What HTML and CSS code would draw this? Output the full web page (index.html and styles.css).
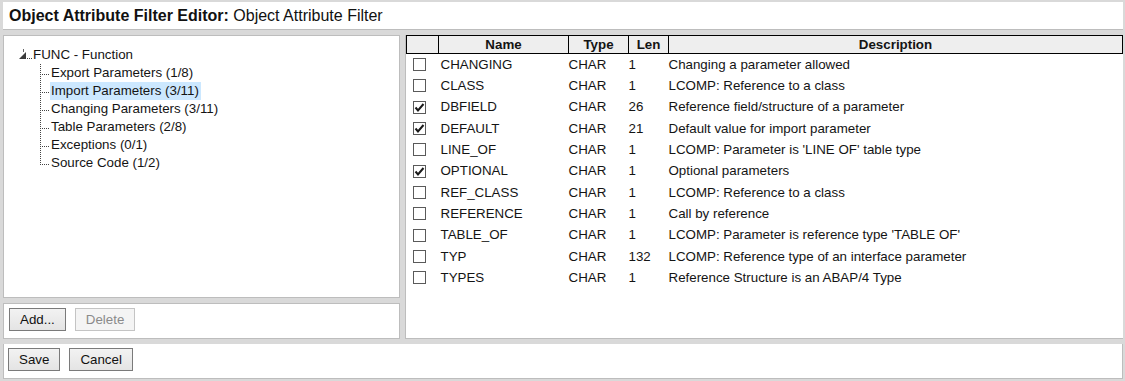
FILE: index.html
```html
<!DOCTYPE html>
<html>
<head>
<meta charset="UTF-8">
<title>Object Attribute Filter Editor</title>
<link rel="stylesheet" href="styles.css">
</head>
<body>
<div class="app">
  <div class="titlebar"><b>Object Attribute Filter Editor:</b> Object Attribute Filter</div>

  <div class="main">
    <div class="leftcol">
      <div class="panel tree">
        <div class="root">
          <svg class="twisty" width="15" height="12" viewBox="0 0 15 12">
            <path d="M5.5 1v3" stroke="#666" stroke-width="1"/>
            <polygon points="8,4 8,11 1,11" fill="#3a3a3a"/>
            <rect x="9" y="10" width="1" height="1" fill="#444"/>
            <rect x="11" y="10" width="1" height="1" fill="#444"/>
            <rect x="13" y="10" width="1" height="1" fill="#444"/>
          </svg>
          <span class="label">FUNC - Function</span>
        </div>
        <ul class="children">
          <li><span class="label">Export Parameters (1/8)</span></li>
          <li class="selected"><span class="label">Import Parameters (3/11)</span></li>
          <li><span class="label">Changing Parameters (3/11)</span></li>
          <li><span class="label">Table Parameters (2/8)</span></li>
          <li><span class="label">Exceptions (0/1)</span></li>
          <li class="last"><span class="label">Source Code (1/2)</span></li>
        </ul>
      </div>
      <div class="hsplit"></div>
      <div class="panel actions">
        <button class="btn">Add...</button>
        <button class="btn" disabled>Delete</button>
      </div>
    </div>

    <div class="vsplit"></div>

    <div class="panel grid">
      <table class="attrs">
        <colgroup>
          <col class="c-sel"><col class="c-name"><col class="c-type"><col class="c-len"><col>
        </colgroup>
        <thead>
          <tr><th></th><th>Name</th><th>Type</th><th>Len</th><th>Description</th></tr>
        </thead>
        <tbody>
          <tr><td class="sel"><span class="cb"></span></td><td class="name">CHANGING</td><td>CHAR</td><td>1</td><td>Changing a parameter allowed</td></tr>
          <tr><td class="sel"><span class="cb"></span></td><td class="name">CLASS</td><td>CHAR</td><td>1</td><td>LCOMP: Reference to a class</td></tr>
          <tr><td class="sel"><span class="cb on"><svg width="11" height="11" viewBox="0 0 11 11"><polyline points="1.5,5.5 4,8.5 9.5,2" fill="none" stroke="#1a1a1a" stroke-width="2"/></svg></span></td><td class="name">DBFIELD</td><td>CHAR</td><td>26</td><td>Reference field/structure of a parameter</td></tr>
          <tr><td class="sel"><span class="cb on"><svg width="11" height="11" viewBox="0 0 11 11"><polyline points="1.5,5.5 4,8.5 9.5,2" fill="none" stroke="#1a1a1a" stroke-width="2"/></svg></span></td><td class="name">DEFAULT</td><td>CHAR</td><td>21</td><td>Default value for import parameter</td></tr>
          <tr><td class="sel"><span class="cb"></span></td><td class="name">LINE_OF</td><td>CHAR</td><td>1</td><td>LCOMP: Parameter is 'LINE OF' table type</td></tr>
          <tr><td class="sel"><span class="cb on"><svg width="11" height="11" viewBox="0 0 11 11"><polyline points="1.5,5.5 4,8.5 9.5,2" fill="none" stroke="#1a1a1a" stroke-width="2"/></svg></span></td><td class="name">OPTIONAL</td><td>CHAR</td><td>1</td><td>Optional parameters</td></tr>
          <tr><td class="sel"><span class="cb"></span></td><td class="name">REF_CLASS</td><td>CHAR</td><td>1</td><td>LCOMP: Reference to a class</td></tr>
          <tr><td class="sel"><span class="cb"></span></td><td class="name">REFERENCE</td><td>CHAR</td><td>1</td><td>Call by reference</td></tr>
          <tr><td class="sel"><span class="cb"></span></td><td class="name">TABLE_OF</td><td>CHAR</td><td>1</td><td>LCOMP: Parameter is reference type 'TABLE OF'</td></tr>
          <tr><td class="sel"><span class="cb"></span></td><td class="name">TYP</td><td>CHAR</td><td>132</td><td>LCOMP: Reference type of an interface parameter</td></tr>
          <tr><td class="sel"><span class="cb"></span></td><td class="name">TYPES</td><td>CHAR</td><td>1</td><td>Reference Structure is an ABAP/4 Type</td></tr>
        </tbody>
      </table>
    </div>
  </div>

  <div class="panel footer">
    <button class="btn">Save</button>
    <button class="btn">Cancel</button>
  </div>
</div>
</body>
</html>
```

FILE: styles.css
```css
body{margin:0;font-family:"Liberation Sans",Arial,sans-serif;font-size:13.33px;color:#141414;background:#fff}
.app{width:1125px;height:381px;box-sizing:border-box;padding:2px 2px 2px 3px;background:#d9d9d9;display:flex;flex-direction:column;gap:5px}
.panel{background:#fff;border:1px solid #bdbdbd;box-sizing:border-box}
.titlebar{height:28px;background:#fff;border-bottom:1px solid #bdbdbd;box-sizing:border-box;padding:5px 0 0 6px;font-size:16px;line-height:18px;color:#111}
.main{height:304px;display:flex}
.leftcol{width:397px;display:flex;flex-direction:column}
.tree{flex:1;padding:10px 0 0 14px}
.hsplit{height:5px}
.vsplit{width:5px}
.actions{height:36px;padding:4px 0 0 5px;display:flex;gap:9px;align-items:flex-start}
.grid{flex:1;border-top:0;border-right:0;padding:0}
.footer{height:35px;padding:4px 0 0 4px;display:flex;gap:9px;align-items:flex-start;border-top:0}

/* tree */
.root{display:flex;align-items:center;height:18px}
.twisty{margin-top:-2px}
.root .label{padding-left:0}
.children{list-style:none;margin:0 0 0 22px;padding:0}
.children li{display:flex;height:18px;align-items:center}
.children li::before{content:"";width:10px;align-self:stretch;
  background-image:repeating-linear-gradient(to bottom,#444 0 1px,transparent 1px 2px),repeating-linear-gradient(to right,#444 0 1px,transparent 1px 2px);
  background-size:1px 100%,10px 1px;background-position:0 0,0 10px;background-repeat:no-repeat}
.children li.last::before{background-size:1px 10px,10px 1px}
.label{padding:0 2px 0 1px;line-height:18px}
.selected .label{background:#cce8ff}

/* table */
.attrs{width:100%;border-collapse:collapse;table-layout:fixed}
.c-sel{width:32px}
.c-name{width:130px}
.c-type{width:60px}
.c-len{width:40px}
.attrs th{border:1px solid #000;background:#eeeeee;font-weight:bold;height:17px;padding:0;line-height:16px;text-align:center}
.attrs td{height:21.33px;padding:0;white-space:nowrap;line-height:16px}
.attrs td.name{padding-left:2px}
.attrs td.sel{padding-left:6px}
.cb{display:block;width:13px;height:13px;box-sizing:border-box;border:1px solid #5a5a5a;background:#fff}
.cb svg{display:block;margin:0}

/* buttons */
.btn{font-family:"Liberation Sans",Arial,sans-serif;font-size:13.33px;color:#111;height:23px;padding:0 10px;border:1px solid #7a7a7a;background:linear-gradient(#f2f2f2,#e4e4e4);border-radius:0;line-height:20px}
.btn:disabled{color:#8a8a8a;border-color:#c4c4c4;background:#f4f4f4}
```
